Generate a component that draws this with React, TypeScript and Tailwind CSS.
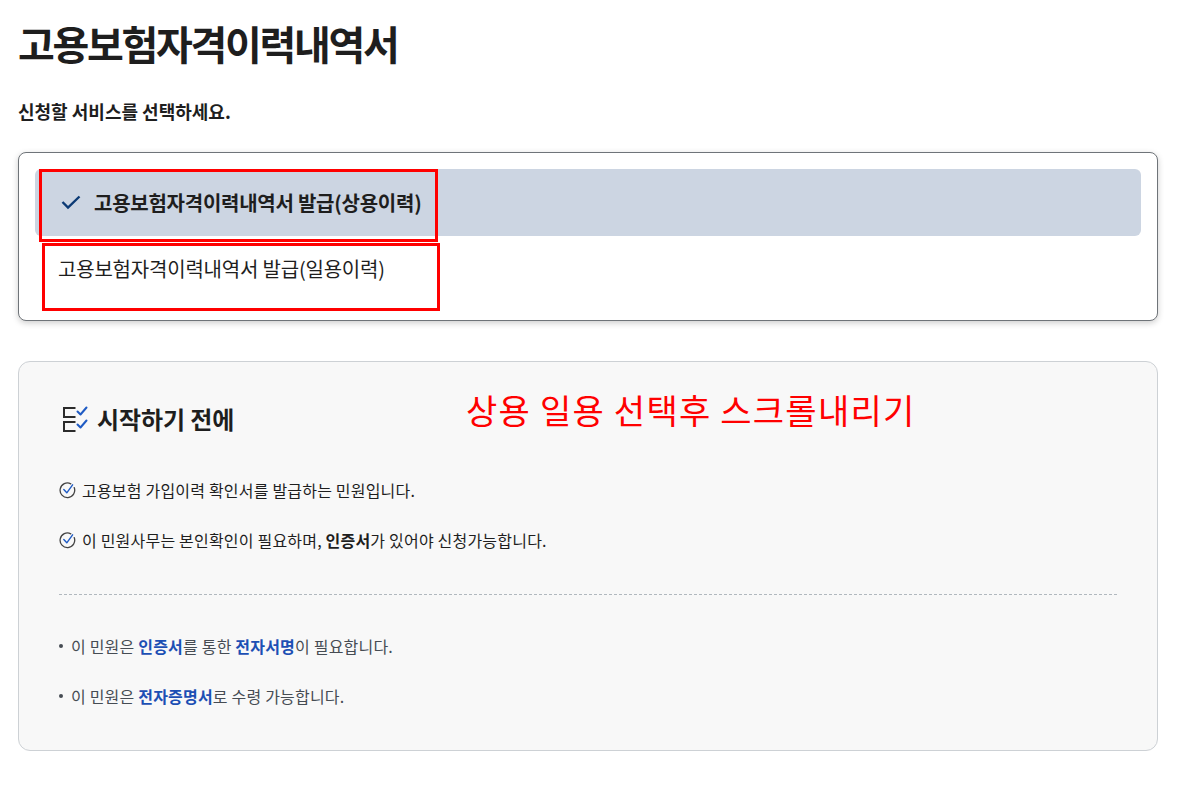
const font = "font-['Noto_Sans_CJK_KR','Noto_Sans',sans-serif]";

function CircleCheck() {
  return (
    <svg width="18" height="18" viewBox="0 0 18 18" fill="none" className="shrink-0">
      <path d="M15.2 6.6A7.3 7.3 0 1 1 11.8 2.8" stroke="#444" strokeWidth="1.3" strokeLinecap="round" />
      <path d="M4.8 8.6 7.8 11.8 13.6 3.8" stroke="#1f5bc4" strokeWidth="1.4" strokeLinecap="round" strokeLinejoin="round" />
    </svg>
  );
}

function ListIcon() {
  return (
    <svg width="30" height="30" viewBox="0 0 30 30" fill="none">
      <path d="M16.5 4H5V13H16.5M16.5 18H5V27H16.5" stroke="#2b2b2b" strokeWidth="2" />
      <path d="M18.5 7.5l3 3 6-7M18.5 20.5l3 3 6-7" stroke="#1f5bc4" strokeWidth="2" strokeLinecap="round" strokeLinejoin="round" />
    </svg>
  );
}

export default function App() {
  return (
    <div className={`${font} w-[1177px] h-[788px] overflow-hidden bg-white px-[18px] text-[#1e1e1e]`}>
      <h1 className="pt-[15px] text-[40px] leading-[56px] font-bold tracking-[-2.3px]">고용보험자격이력내역서</h1>
      <p className="mt-[27px] text-[18px] leading-[26px] font-bold">신청할 서비스를 선택하세요.</p>

      <div className="mt-[28px] w-[1140px] h-[169px] rounded-lg border border-[#6f7479] bg-white px-[16px] py-[16px] shadow-[0_2px_6px_rgba(0,0,0,0.2)]">
        <div className="relative flex h-[67px] items-center gap-[11px] rounded-md bg-[#ccd5e2] pl-[26px] text-[20px] font-bold tracking-[-0.25px]">
          <svg width="22" height="22" viewBox="0 0 22 22" fill="none">
            <path d="M1.5 10 7 15.5 18.5 4.5" stroke="#0b3a75" strokeWidth="2.4" />
          </svg>
          고용보험자격이력내역서 발급(상용이력)
          <div className="absolute left-[4px] top-0 h-[73px] w-[399px] border-[3px] border-[#ff0000]" />
        </div>
        <div className="relative flex h-[67px] items-start pl-[23px] pt-[18px] text-[20px] tracking-[-0.2px]">
          고용보험자격이력내역서 발급(일용이력)
          <div className="absolute left-[7px] top-[7px] h-[68px] w-[398px] border-[3px] border-[#ff0000]" />
        </div>
      </div>

      <div className="relative mt-[40px] h-[390px] w-[1140px] rounded-xl border border-[#cdd1d5] bg-[#f8f8f8] px-[40px] pt-[39px]">
        <div className="absolute left-[447px] top-[25px] text-[34px] leading-[46px] tracking-[1.25px] text-[#ff0000]">
          상용 일용 선택후 스크롤내리기
        </div>
        <div className="flex items-center gap-[8px] text-[24px] leading-[36px] font-bold tracking-[-0.1px]">
          <ListIcon />
          시작하기 전에
        </div>
        <ul className="mt-[41px] flex flex-col gap-[26px] text-[16px] leading-[24px] tracking-[0.2px]">
          <li className="flex items-center gap-[5px]">
            <CircleCheck />
            고용보험 가입이력 확인서를 발급하는 민원입니다.
          </li>
          <li className="flex items-center gap-[5px]">
            <CircleCheck />
            <span>이 민원사무는 본인확인이 필요하며, <b>인증서</b>가 있어야 신청가능합니다.</span>
          </li>
        </ul>
        <div className="mt-[42px] w-[1058px] border-t border-dashed border-[#b1b8be]" />
        <ul className="mt-[39px] flex flex-col gap-[26px] text-[16px] leading-[24px] tracking-[0.2px] text-[#464c53]">
          <li className="flex items-center gap-[8px]">
            <div className="h-[4px] w-[4px] rounded-full bg-[#464c53]" />
            <span>이 민원은 <b className="text-[#1c4fb4]">인증서</b>를 통한 <b className="text-[#1c4fb4]">전자서명</b>이 필요합니다.</span>
          </li>
          <li className="flex items-center gap-[8px]">
            <div className="h-[4px] w-[4px] rounded-full bg-[#464c53]" />
            <span>이 민원은 <b className="text-[#1c4fb4]">전자증명서</b>로 수령 가능합니다.</span>
          </li>
        </ul>
      </div>
    </div>
  );
}
